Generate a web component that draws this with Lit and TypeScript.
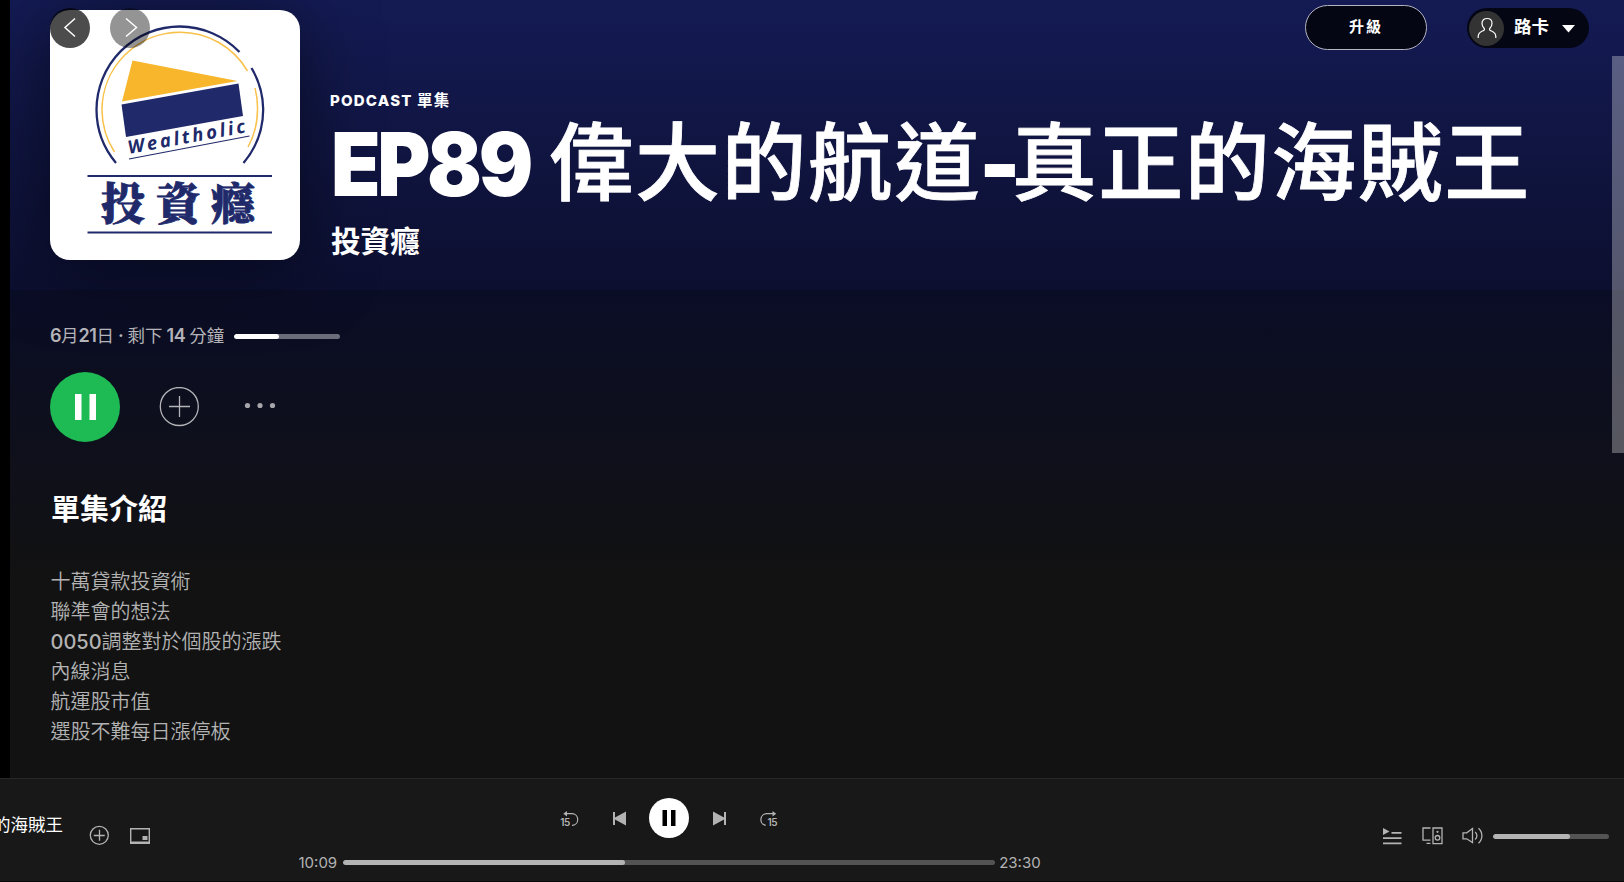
import { LitElement, html, css, svg } from "lit";
import { customElement, property } from "lit/decorators.js";

@customElement("cover-art")
class CoverArt extends LitElement {
  static styles = css`
    :host { display: block; width: 250px; height: 250px; border-radius: 20px; background: #fff; box-shadow: 0 5px 75px rgba(0, 0, 0, 0.5); overflow: hidden; }
    svg { display: block; }
    .word { font: italic 700 18.5px "Open Sans", "Noto Sans", sans-serif; fill: #20296a; }
    .name { font: 900 44px "Noto Serif CJK TC", "Noto Sans CJK TC", sans-serif; fill: #20296a; stroke: #20296a; stroke-width: 0.8px; }
  `;
  render() {
    return html`<svg width="250" height="250" viewBox="50 10 250 250" fill="none">
      <path d="M116 163A83.5 83.5 0 0 1 96.500 109.800A83.500 83.500 0 0 1 179.900 26.500A83.500 83.500 0 0 1 239.500 52" stroke="#20296a" stroke-width="2.300"/>
      <path d="M251.500 68A83.500 83.500 0 0 1 263.200 109.300A83.500 83.500 0 0 1 243.500 163" stroke="#20296a" stroke-width="2.300"/>
      <path d="M114.500 152A78 78 0 0 1 102 110A78 78 0 0 1 179.700 32.200A78 78 0 0 1 247.500 71" stroke="#f9c04a" stroke-width="1.500"/>
      <path d="M255 88A78 78 0 0 1 257.500 110A78 78 0 0 1 248 147" stroke="#f9c04a" stroke-width="1.500"/>
      <path d="M132.500 60.500 L237.500 81 L122 101.500Z" fill="#f8b62d"/>
      <path d="M121.500 104.500 L238.500 83.500 L243 116 L126 137Z" fill="#20296a"/>
      <text class="word" x="129" y="154" textLength="119" transform="rotate(-10.500 129 154)">Wealtholic</text>
      <path d="M129 159 L249.500 136" stroke="#20296a" stroke-width="1.200"/>
      <path d="M87.500 176H272M87.500 232.500H272" stroke="#20296a" stroke-width="2"/>
      <text class="name" x="101" y="220" textLength="154">投資癮</text>
    </svg>`;
  }
}

@customElement("progress-line")
class ProgressLine extends LitElement {
  @property({ type: Number }) value = 0;
  static styles = css`
    :host { display: block; height: 5px; border-radius: 3px; background: var(--track, #535353); overflow: hidden; }
    .fill { height: 100%; border-radius: 3px; background: var(--fill, #b3b3b3); }
  `;
  render() {
    return html`<div class="fill" style="width:${this.value}%"></div>`;
  }
}

@customElement("app-root")
class AppRoot extends LitElement {
  private notes = [
    { digits: "", text: "十萬貸款投資術" },
    { digits: "", text: "聯準會的想法" },
    { digits: "0050", text: "調整對於個股的漲跌" },
    { digits: "", text: "內線消息" },
    { digits: "", text: "航運股市值" },
    { digits: "", text: "選股不難每日漲停板" },
  ];

  static styles = css`
    :host { display: flex; flex-direction: column; width: 1624px; height: 882px; overflow: hidden; background: #000; color: #fff; font-family: Inter, "Noto Sans CJK TC", sans-serif; }
    * { box-sizing: border-box; }
    svg { display: block; }
    .main { height: 778px; margin-left: 10px; position: relative; background: #121212; overflow: hidden; }
    .hero { height: 290px; padding: 10px 40px 0; display: flex; gap: 30px; background: linear-gradient(#141b54, #0c0f2f); }
    .heading { padding-top: 81px; white-space: nowrap; }
    .kind { font-size: 15px; line-height: 20px; font-weight: 800; letter-spacing: 1.2px; }
    .kind .zh { font-size: 15.5px; font-weight: 700; }
    .title { margin: 0; height: 108px; line-height: 106px; display: flex; padding-left: 1px; }
    .title .latin { width: 217.5px; font-size: 88px; font-weight: 900; letter-spacing: -3.6px; transform: scaleX(0.92); transform-origin: left; }
    .title .dash { font-size: 88px; font-weight: 900; letter-spacing: -11px; margin: 0 2px 0 -2px; }
    .title .zh { font-size: 85px; line-height: 105px; font-weight: 500; letter-spacing: 1.5px; -webkit-text-stroke: 0.8px #fff; }
    .show { font-size: 29.6px; line-height: 36px; font-weight: 700; padding: 4px 0 0 1px; }
    .body { height: 488px; padding: 30px 40px 0; background: linear-gradient(#0a0d26, #121212 290px); }
    .meta { display: flex; align-items: center; width: 290px; height: 28px; font-size: 17.5px; color: #b3b3b8; white-space: nowrap; }
    .meta b { font-size: 18px; font-weight: 600; letter-spacing: -0.45px; }
    .meta progress-line { width: 106px; margin: 4px 0 0 auto; --track: #6c6d7a; --fill: #fff; }
    .actions { display: flex; align-items: center; height: 70px; margin-top: 24px; }
    .play { width: 70px; height: 70px; border-radius: 50%; background: #1eba54; display: grid; place-items: center; }
    .plus { margin-left: 39px; }
    .dots { margin: -1px 0 0 45px; }
    h2 { margin: 46px 0 0 1px; font-size: 29px; line-height: 44px; font-weight: 700; }
    .notes { margin: 35px 0 0 0.5px; font-size: 20px; line-height: 30px; color: #b3b3b3; font-weight: 350; }
    .notes b { font-weight: 450; }
    .top { position: absolute; left: 0; top: 0; width: 100%; height: 56px; padding: 0 35px 0 40px; display: flex; align-items: center; }
    .nav { width: 40px; height: 40px; border-radius: 50%; display: grid; place-items: center; background: rgba(0, 0, 0, 0.7); margin-right: 20px; }
    .nav.off { background: rgba(0, 0, 0, 0.42); }
    .upgrade { margin: -2px 0 0 auto; width: 122px; height: 45px; border: 1px solid #b5b5c2; border-radius: 23px; background: #050614; font-size: 15px; font-weight: 700; letter-spacing: 2px; display: grid; place-items: center; padding-bottom: 3px; }
    .user { margin-left: 40px; width: 122px; height: 40px; border-radius: 20px; background: #050614; display: flex; align-items: center; padding-left: 2px; font-size: 17.5px; font-weight: 700; }
    .username { padding-bottom: 5px; }
    .avatar { width: 35px; height: 35px; border-radius: 50%; background: #333; display: grid; place-items: center; margin-right: 10px; }
    .caret { margin: 2px 0 0 13px; }
    .scroll { position: absolute; right: 0; top: 56px; width: 12px; height: 397px; background: rgba(255, 255, 255, 0.3); }
    .player { height: 104px; background: #181818; border-top: 1px solid #282828; border-bottom: 1px solid #080808; display: grid; grid-template-columns: 298px 743px 1fr; color: #b3b3b3; }
    .now { display: flex; align-items: center; overflow: hidden; }
    .track { width: 63px; display: flex; justify-content: flex-end; overflow: hidden; color: #fff; font-size: 17.5px; white-space: nowrap; margin-top: -14px; }
    .add { margin: 10px 0 0 26px; }
    .pip { margin: 11px 0 0 21px; }
    .controls { display: grid; grid-template-columns: repeat(5, 49.8px); justify-items: center; justify-content: center; align-items: center; height: 40px; margin: 19px 0.5px 0 0; }
    .pause { width: 40px; height: 40px; border-radius: 50%; background: #fff; display: grid; place-items: center; }
    .time { display: flex; align-items: center; font-size: 15px; height: 20px; margin: 14px 0 0 0.5px; }
    .time progress-line { width: 652px; margin: 1px 4px 0 6px; }
    .extra { display: flex; align-items: center; justify-content: flex-end; padding: 12px 15px 0 0; }
    .extra progress-line { width: 116px; margin-left: 9px; }
    .devices { margin: 0 19px 0 20px; }
    .num { font: 600 10px Inter, sans-serif; fill: #b3b3b3; }
  `;

  private seek(back: boolean) {
    const arc = back
      ? svg`<path d="M5 5.700H12.600A5.900 5.900 0 0 1 12.600 17.400H12" /><path d="M7 3 3.300 5.700 7 8.400Z" fill="#b3b3b3" stroke="none"/>`
      : svg`<path d="M15 5.700H7.700A5.900 5.900 0 0 0 6.700 17.400" /><path d="M13.500 3 17.200 5.700 13.500 8.400Z" fill="#b3b3b3" stroke="none"/>`;
    return html`<svg width="20" height="20" viewBox="0 0 20 20" fill="none" stroke="#b3b3b3" stroke-width="1.200">${arc}<text class="num" stroke="none" x=${back ? 0.3 : 8.5} y="18" textLength="10">15</text></svg>`;
  }

  render() {
    return html`
      <div class="main">
        <div class="hero">
          <cover-art></cover-art>
          <div class="heading">
            <div class="kind">PODCAST <span class="zh">單集</span></div>
            <h1 class="title"><span class="latin">EP89&nbsp;</span><span class="zh">偉大的航道</span><span class="dash">-</span><span class="zh">真正的海賊王</span></h1>
            <div class="show">投資癮</div>
          </div>
        </div>
        <div class="body">
          <div class="meta"><span><b>6</b>月<b>21</b>日<b> · </b>剩下<b> 14 </b>分鐘</span><progress-line value="42.500"></progress-line></div>
          <div class="actions">
            <div class="play"><svg width="22" height="28" viewBox="0 0 22 28" fill="#fff"><path d="M1 1h6.500v26H1zM15.500 1H22v26h-6.500z"/></svg></div>
            <svg class="plus" width="40" height="40" viewBox="0 0 40 40" fill="none" stroke="#b3b3b8" stroke-width="1.300"><circle cx="20.300" cy="19.500" r="19"/><path d="M10 19.500h21M20.500 9v21"/></svg>
            <svg class="dots" width="32" height="10" viewBox="0 0 32 10" fill="#a6a6ab"><circle cx="3.500" cy="3.500" r="2.600"/><circle cx="16" cy="3.500" r="2.600"/><circle cx="28.500" cy="3.500" r="2.600"/></svg>
          </div>
          <h2>單集介紹</h2>
          <div class="notes">${this.notes.map((n) => html`<div>${n.digits ? html`<b>${n.digits}</b>` : ""}${n.text}</div>`)}</div>
        </div>
        <div class="top">
          <div class="nav"><svg width="40" height="40" fill="none" stroke="#fff" stroke-width="1.500"><path d="M25 10.500 15 19.500l10 9"/></svg></div>
          <div class="nav off"><svg width="40" height="40" fill="none" stroke="#fff" stroke-width="1.500"><path d="M16 10.500 26.500 19.500 16 28.500"/></svg></div>
          <div class="upgrade">升級</div>
          <div class="user">
            <div class="avatar"><svg width="20" height="22" viewBox="0 0 20 22" fill="none" stroke="#fff" stroke-width="1.200"><path d="M1.200 21v-1.500c0-3 2-4.500 4.200-5.500 2.200-.8 2.700-1.800 1.500-3C5.700 9.700 5 8.300 5 6.300 5 3.200 7.200 1.500 10 1.500s5 1.700 5 4.800c0 2-.7 3.400-1.900 4.700-1.200 1.200-.7 2.200 1.500 3 2.200 1 4.200 2.500 4.200 5.500V21"/></svg></div>
            <span class="username">路卡</span>
            <svg class="caret" width="13" height="8" fill="#fff"><path d="M0 0h13L6.500 7.500z"/></svg>
          </div>
        </div>
        <div class="scroll"></div>
      </div>
      <div class="player">
        <div class="now">
          <div class="track">EP89 偉大的航道-真正的海賊王</div>
          <svg class="add" width="20" height="20" fill="none" stroke="#b3b3b3" stroke-width="1.300"><circle cx="10.300" cy="10.300" r="9"/><path d="M4.800 10.500h11M10.500 4.800v11"/></svg>
          <svg class="pip" width="20" height="16" fill="#b3b3b3"><path fill-rule="evenodd" d="M0 0h20v16H0zM1.400 1.400v12.100h17.200V1.400z"/><path d="M12.500 8h5v4h-5z"/></svg>
        </div>
        <div>
          <div class="controls">
            ${this.seek(true)}
            <svg width="15" height="15" fill="#b3b3b3"><path d="M1 1h2v5.500L14 .500v14L3 8.500V14H1z"/></svg>
            <div class="pause"><svg width="14" height="16"><path d="M.500 0h4.500v16H.500zM9 0h4.500v16H9z"/></svg></div>
            <svg width="15" height="15" fill="#b3b3b3"><path d="M14 1h-2v5.500L1 .500v14l11-6V14h2z"/></svg>
            ${this.seek(false)}
          </div>
          <div class="time"><span>10:09</span><progress-line value="43.200"></progress-line><span>23:30</span></div>
        </div>
        <div class="extra">
          <svg width="19" height="17" fill="#b3b3b3"><path d="M0 0 6.500 3.500 0 7zM8.500 4H18.500v1.700H8.500zM0 9.300h18.500V11H0zM0 14.500h18.500v1.700H0z"/></svg>
          <svg class="devices" width="21" height="18" fill="none" stroke="#b3b3b3" stroke-width="1.300"><path d="M8.500 1H1v12.200h7.500M4.500 16.300h4M11 1h9v15.600h-9z"/><circle cx="15.500" cy="10.800" r="2.300"/><circle cx="15.500" cy="4.800" r=".500"/></svg>
          <svg width="22" height="18" fill="none" stroke="#b3b3b3" stroke-width="1.300"><path d="M1 5.800h3.700L10.500 1.500v14L4.700 11.800H1zM13.200 5a5 5 0 0 1 0 7.500M16.500 1.300a10 10 0 0 1 0 15"/></svg>
          <progress-line value="66.500"></progress-line>
        </div>
      </div>
    `;
  }
}
